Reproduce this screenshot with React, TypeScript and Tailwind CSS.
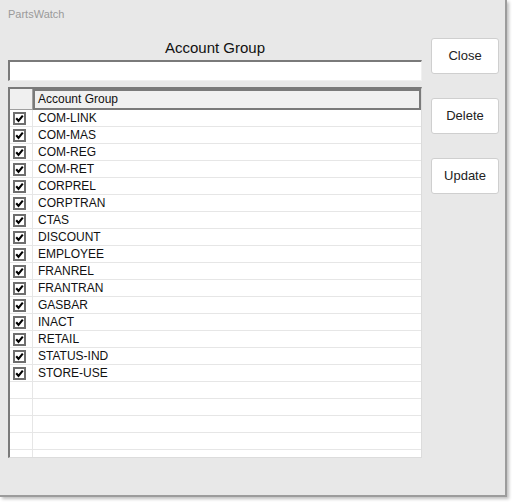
import React from 'react';

const GROUPS = [
  'COM-LINK',
  'COM-MAS',
  'COM-REG',
  'COM-RET',
  'CORPREL',
  'CORPTRAN',
  'CTAS',
  'DISCOUNT',
  'EMPLOYEE',
  'FRANREL',
  'FRANTRAN',
  'GASBAR',
  'INACT',
  'RETAIL',
  'STATUS-IND',
  'STORE-USE',
];

function CheckBox() {
  return (
    <div className="w-[13px] h-[13px] border-2 border-[#6e6e6e] bg-white flex items-center justify-center">
      <svg width="9" height="9" viewBox="0 0 9 9">
        <path d="M1.2 4.3 L3.5 6.8 L7.8 1.6" fill="none" stroke="#000" strokeWidth="2.1" />
      </svg>
    </div>
  );
}

function WinButton({ label }: { label: string }) {
  return (
    <button className="w-[68px] h-[36px] bg-white border border-[#cfcfcf] rounded-[3px] text-[13px] text-[#222]">
      {label}
    </button>
  );
}

export default function App() {
  const emptyRows = 4;
  return (
    <div className="w-[513px] h-[504px] bg-white" style={{ fontFamily: '"Liberation Sans", Arial, sans-serif' }}>
      <div className="w-[507px] h-[497px] bg-[#e8e8e8] border-r-2 border-b-2 border-[#9c9c9c] shadow-[2px_2px_3px_rgba(0,0,0,0.25)] flex flex-col">
        {/* Title bar */}
        <div className="h-[28px] pl-[8px] pt-[6px] text-[11px] text-[#9a9a9a]">PartsWatch</div>

        <div className="flex">
          {/* Left side */}
          <div className="w-[414px] ml-[8px] flex flex-col">
            <div className="h-[32px] pt-[11px] text-center text-[15px] leading-[18px] text-[#111]">Account Group</div>

            {/* Text box */}
            <div className="h-[21px] bg-white border-t-2 border-l-2 border-[#7a7a7a] border-r border-b border-r-[#f0f0f0] border-b-[#f0f0f0]" />

            {/* Grid */}
            <div className="mt-[6px] h-[371px] bg-white border-t-2 border-l-2 border-[#7a7a7a] border-r border-b border-r-[#dcdcdc] border-b-[#dcdcdc] overflow-hidden">
              <div className="flex h-[21px] bg-[#f0f0f0]">
                <div className="w-[23px] border-r border-b border-[#a0a0a0]" />
                <div className="flex-1 border-2 border-[#7a7a7a] pl-[3px] pb-[2px] flex items-center text-[12px] text-[#111]">
                  Account Group
                </div>
              </div>
              {GROUPS.map((g) => (
                <div key={g} className="flex h-[17px] border-b border-[#e6e6e6]">
                  <div className="w-[23px] border-r border-[#e6e6e6] flex items-center pl-[3px]">
                    <CheckBox />
                  </div>
                  <div className="flex-1 pl-[5px] flex items-center text-[12px] text-[#111]">{g}</div>
                </div>
              ))}
              {Array.from({ length: emptyRows + 1 }).map((_, i) => (
                <div key={i} className="flex h-[17px] border-b border-[#e6e6e6]">
                  <div className="w-[23px] border-r border-[#e6e6e6]" />
                  <div className="flex-1" />
                </div>
              ))}
            </div>
          </div>

          {/* Buttons */}
          <div className="ml-[9px] pt-[10px] flex flex-col gap-[24px]">
            <WinButton label="Close" />
            <WinButton label="Delete" />
            <WinButton label="Update" />
          </div>
        </div>
      </div>
    </div>
  );
}
